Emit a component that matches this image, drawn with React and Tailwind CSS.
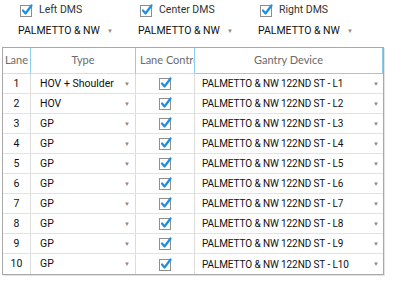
const rows = [
  { lane: 1, type: "HOV + Shoulder" },
  { lane: 2, type: "HOV" },
  { lane: 3, type: "GP" },
  { lane: 4, type: "GP" },
  { lane: 5, type: "GP" },
  { lane: 6, type: "GP" },
  { lane: 7, type: "GP" },
  { lane: 8, type: "GP" },
  { lane: 9, type: "GP" },
  { lane: 10, type: "GP" },
];

const Check = () => (
  <svg width="13" height="13" viewBox="0 0 13 13" className="shrink-0">
    <rect x="0.5" y="1.5" width="11" height="11" fill="#fff" stroke="#8e8e8e" />
    <path d="M3 6.5 L5.5 9.5 L11.5 1.5" fill="none" stroke="#1e8fe0" strokeWidth="2.2" strokeLinecap="round" strokeLinejoin="round" />
  </svg>
);

const Arrow = () => <span className="text-[6px] text-[#8a8a8a] leading-none">▼</span>;

const App = () => {
  return (
    <div className="w-[402px] h-[283px] bg-white font-['Roboto',sans-serif] text-[10.5px] text-[#111] whitespace-nowrap">
      <div className="flex pt-[2px] pl-[20px] h-[18px]">
        {["Left DMS", "Center DMS", "Right DMS"].map((label) => (
          <div key={label} className="w-[120px] flex items-center gap-[6px]">
            <Check />
            <span className="text-[#333]">{label}</span>
          </div>
        ))}
      </div>
      <div className="flex pl-[18px] h-[29px] items-center pb-[4px]">
        {[0, 1, 2].map((i) => (
          <div key={i} className="w-[120px] flex items-center">
            <span className="w-[89px]">PALMETTO &amp; NW</span>
            <Arrow />
          </div>
        ))}
      </div>
      <div className="ml-[2px] w-[382px] border border-[#a8a8a8] shadow-[1px_1px_0_#e4e4e4]">
        <div className="grid grid-cols-[28px_105px_59px_1fr] h-[26px] font-['Lato',sans-serif] text-[11px] text-[#6a6a6a]">
          <div className="border-r border-r-[#8fcdef] border-b border-b-[#dcdcdc] flex items-center justify-center overflow-hidden">Lane</div>
          <div className="border-r border-r-[#8fcdef] border-b border-b-[#dcdcdc] flex items-center justify-center">Type</div>
          <div className="border-r border-r-[#8fcdef] border-b border-b-[#dcdcdc] flex items-center pl-[4px] overflow-hidden">Lane Control</div>
          <div className="border-r border-r-[#8fcdef] border-b border-b-[#8fcdef] flex items-center justify-center">Gantry Device</div>
        </div>
        {rows.map((r, i) => (
          <div
            key={r.lane}
            className={`grid grid-cols-[28px_105px_59px_1fr] h-[20px] text-[10px] ${i < rows.length - 1 ? "border-b border-[#e2e2e2]" : ""}`}
          >
            <div className="border-r border-[#dcdcdc] flex items-center justify-center text-[10.5px]">{r.lane}</div>
            <div className="border-r border-[#dcdcdc] flex items-center pl-[9px] pr-[5px] justify-between text-[10.5px]">
              <span>{r.type}</span>
              <Arrow />
            </div>
            <div className="border-r border-[#dcdcdc] flex items-center justify-center">
              <Check />
            </div>
            <div className="flex items-center pl-[7px] pr-[4px] justify-between">
              <span className="tracking-[-0.1px]">PALMETTO &amp; NW 122ND ST - L{r.lane}</span>
              <Arrow />
            </div>
          </div>
        ))}
      </div>
    </div>
  );
};

export default App;
